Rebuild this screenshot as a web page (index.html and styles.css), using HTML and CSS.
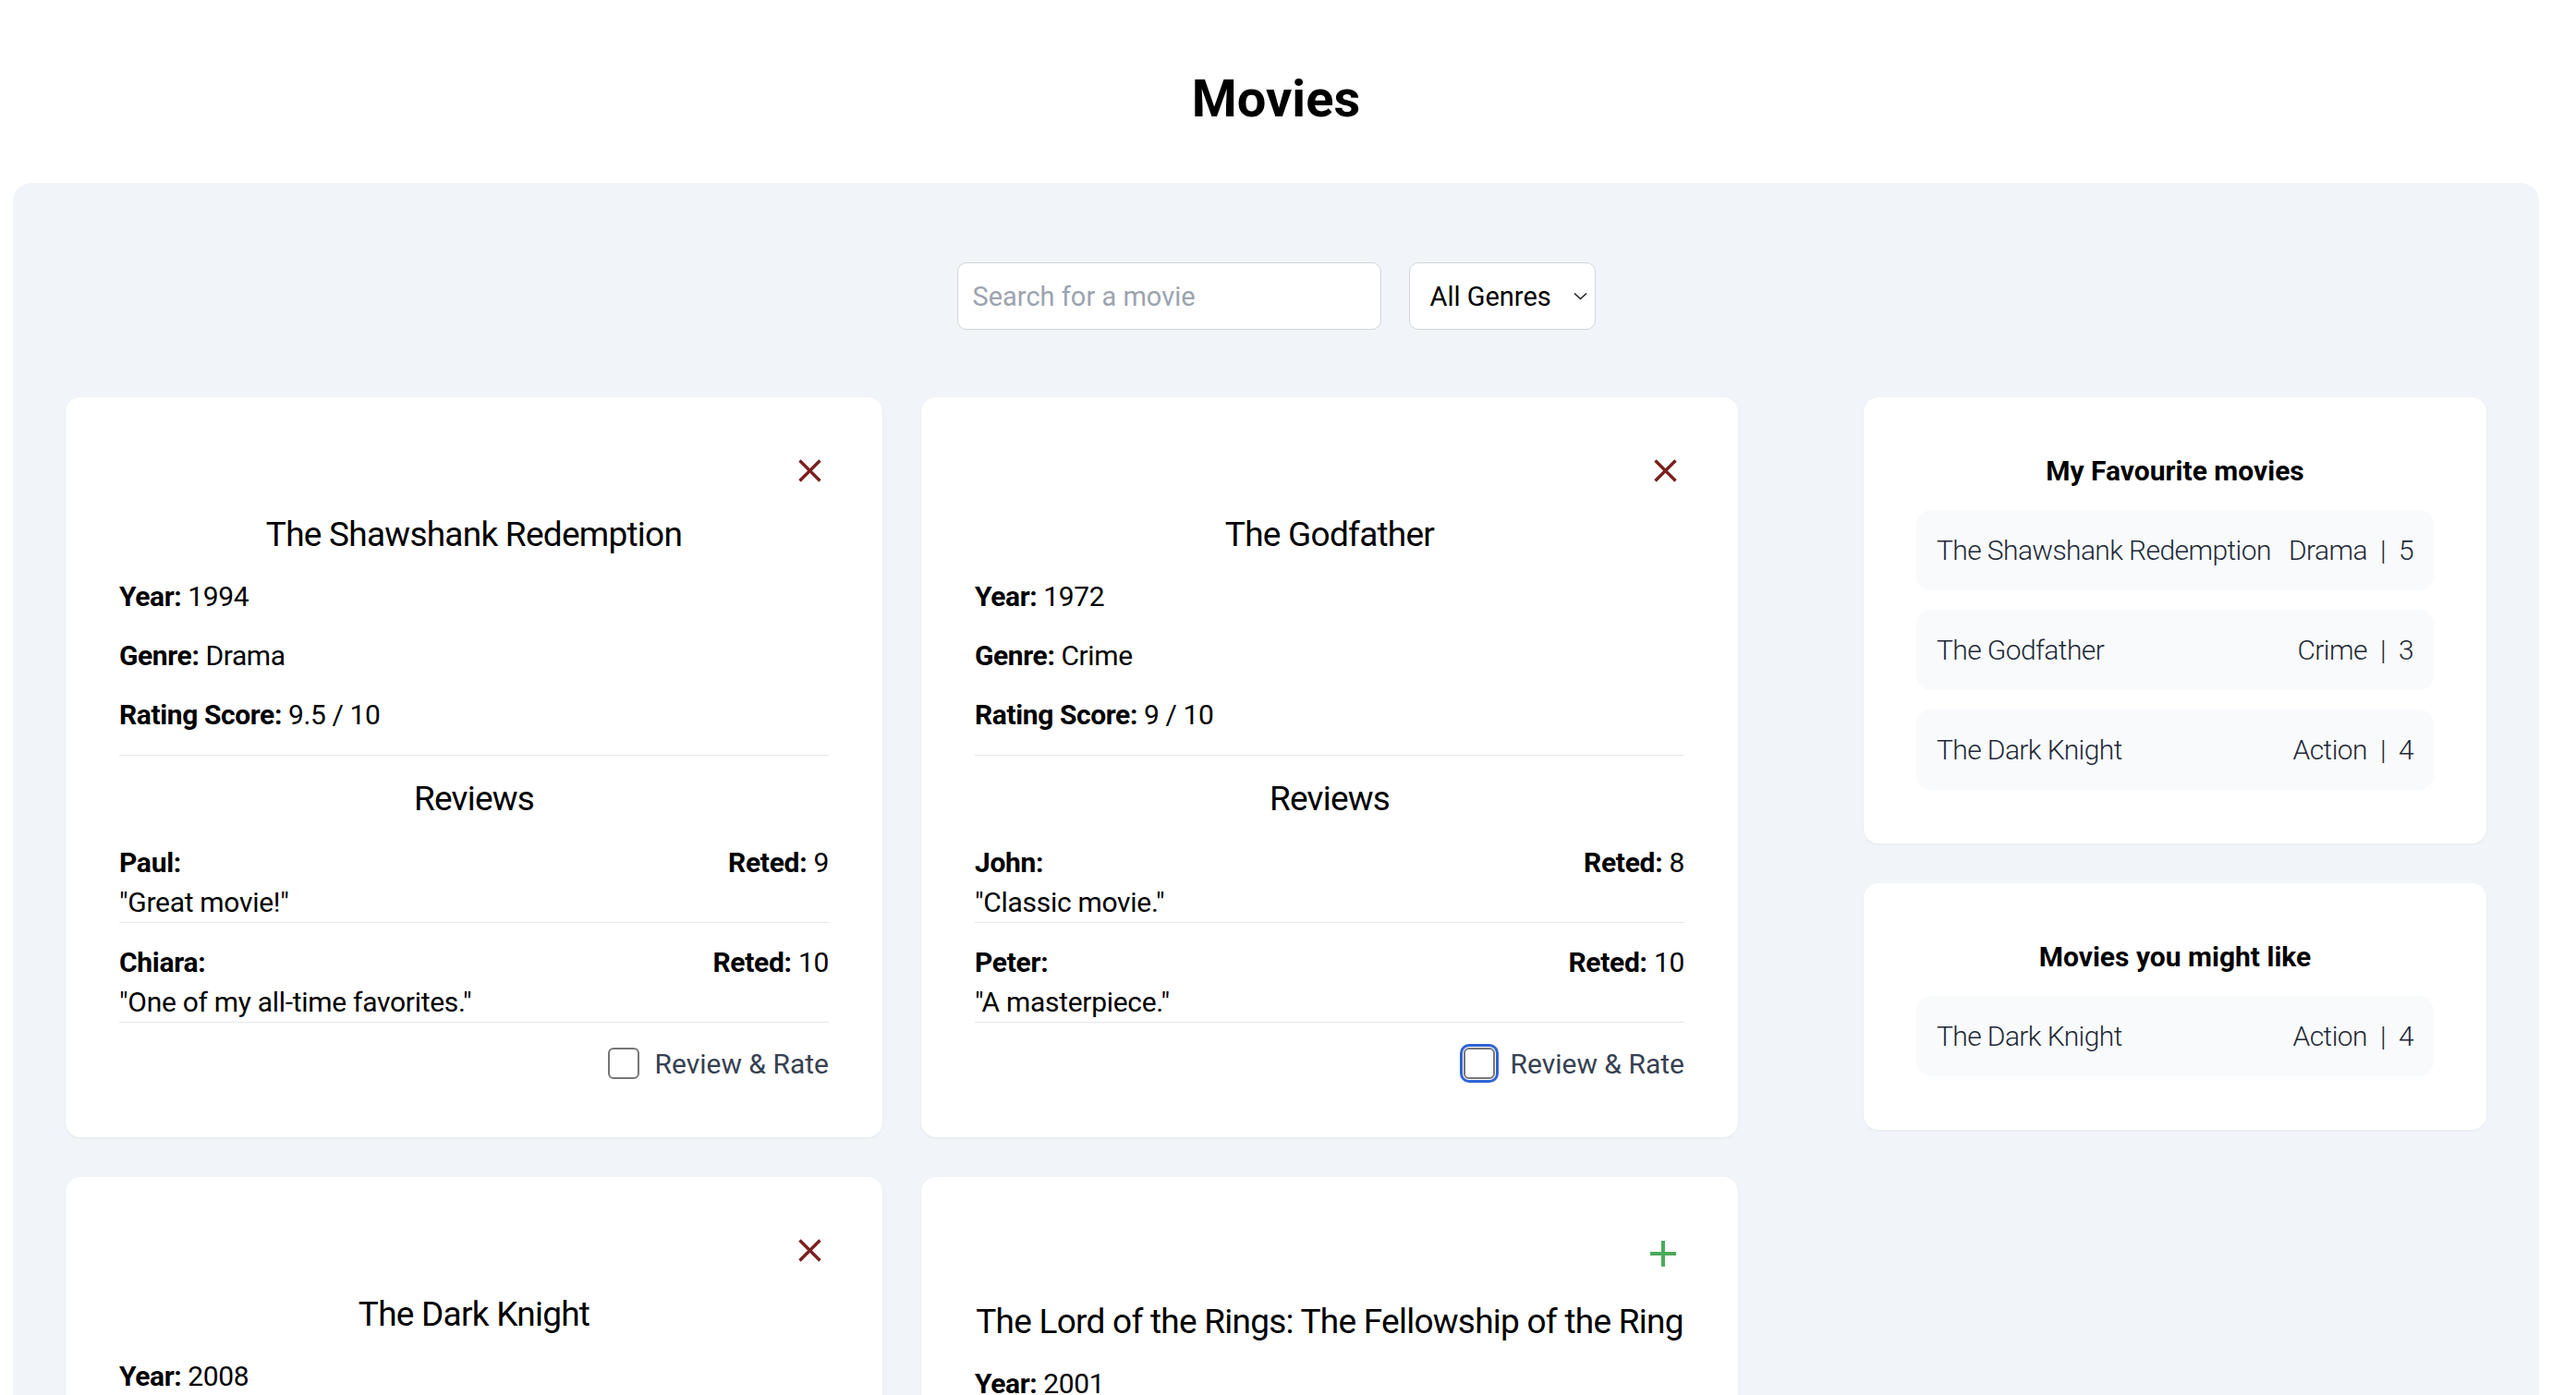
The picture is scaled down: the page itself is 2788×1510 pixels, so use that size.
FILE: index.html
```html
<!DOCTYPE html>
<html lang="en">
<head>
<meta charset="utf-8">
<title>Movies</title>
<link rel="stylesheet" href="styles.css">
</head>
<body>
<div class="page">
  <h1 class="page-title">Movies</h1>
  <main class="panel">
    <div class="filters">
      <input class="search" type="text" placeholder="Search for a movie">
      <div class="select">
        <span>All Genres</span>
        <svg class="chevron" width="15" height="9" viewBox="0 0 15 9"><path d="M1 1.5 L7.5 7.5 L14 1.5" fill="none" stroke="#222" stroke-width="1.6"/></svg>
      </div>
    </div>
    <div class="layout">
      <section class="movies">
        <article class="card">
          <div class="card-top">
            <button class="icon-btn" type="button" aria-label="Remove"><svg width="25" height="25" viewBox="0 0 25 25"><path d="M1.5 1.5 L23.5 23.5 M23.5 1.5 L1.5 23.5" stroke="#7b1f1f" stroke-width="3.4" fill="none"/></svg></button>
          </div>
          <h2 class="card-title">The Shawshank Redemption</h2>
          <p class="info"><b>Year:</b> 1994</p>
          <p class="info"><b>Genre:</b> Drama</p>
          <p class="info"><b>Rating Score:</b> 9.5 / 10</p>
          <div class="reviews">
            <h3 class="reviews-title">Reviews</h3>
            <div class="review">
              <div class="review-head"><b>Paul:</b><span><b>Reted:</b> 9</span></div>
              <div>"Great movie!"</div>
            </div>
            <div class="review">
              <div class="review-head"><b>Chiara:</b><span><b>Reted:</b> 10</span></div>
              <div>"One of my all-time favorites."</div>
            </div>
          </div>
          <label class="review-action"><input class="checkbox" type="checkbox"><span>Review &amp; Rate</span></label>
        </article>

        <article class="card">
          <div class="card-top">
            <button class="icon-btn" type="button" aria-label="Remove"><svg width="25" height="25" viewBox="0 0 25 25"><path d="M1.5 1.5 L23.5 23.5 M23.5 1.5 L1.5 23.5" stroke="#7b1f1f" stroke-width="3.4" fill="none"/></svg></button>
          </div>
          <h2 class="card-title">The Godfather</h2>
          <p class="info"><b>Year:</b> 1972</p>
          <p class="info"><b>Genre:</b> Crime</p>
          <p class="info"><b>Rating Score:</b> 9 / 10</p>
          <div class="reviews">
            <h3 class="reviews-title">Reviews</h3>
            <div class="review">
              <div class="review-head"><b>John:</b><span><b>Reted:</b> 8</span></div>
              <div>"Classic movie."</div>
            </div>
            <div class="review">
              <div class="review-head"><b>Peter:</b><span><b>Reted:</b> 10</span></div>
              <div>"A masterpiece."</div>
            </div>
          </div>
          <label class="review-action"><input class="checkbox checkbox-focus" type="checkbox"><span>Review &amp; Rate</span></label>
        </article>

        <article class="card">
          <div class="card-top">
            <button class="icon-btn" type="button" aria-label="Remove"><svg width="25" height="25" viewBox="0 0 25 25"><path d="M1.5 1.5 L23.5 23.5 M23.5 1.5 L1.5 23.5" stroke="#7b1f1f" stroke-width="3.4" fill="none"/></svg></button>
          </div>
          <h2 class="card-title">The Dark Knight</h2>
          <p class="info"><b>Year:</b> 2008</p>
          <p class="info"><b>Genre:</b> Action</p>
          <p class="info"><b>Rating Score:</b> 9 / 10</p>
          <div class="reviews">
            <h3 class="reviews-title">Reviews</h3>
            <div class="review">
              <div class="review-head"><b>Anna:</b><span><b>Reted:</b> 9</span></div>
              <div>"Heath Ledger is amazing."</div>
            </div>
          </div>
          <label class="review-action"><input class="checkbox" type="checkbox"><span>Review &amp; Rate</span></label>
        </article>

        <article class="card">
          <div class="card-top">
            <button class="icon-btn icon-btn-add" type="button" aria-label="Add"><svg width="30" height="30" viewBox="0 0 30 30"><path d="M15 1 L15 29 M1 15 L29 15" stroke="#4caa5a" stroke-width="4" fill="none"/></svg></button>
          </div>
          <h2 class="card-title">The Lord of the Rings: The Fellowship of the Ring</h2>
          <p class="info"><b>Year:</b> 2001</p>
          <p class="info"><b>Genre:</b> Fantasy</p>
          <p class="info"><b>Rating Score:</b> 8.8 / 10</p>
          <div class="reviews">
            <h3 class="reviews-title">Reviews</h3>
            <div class="review">
              <div class="review-head"><b>Marco:</b><span><b>Reted:</b> 9</span></div>
              <div>"An epic journey."</div>
            </div>
          </div>
          <label class="review-action"><input class="checkbox" type="checkbox"><span>Review &amp; Rate</span></label>
        </article>
      </section>

      <aside class="sidebar">
        <div class="side-card">
          <h3 class="side-title">My Favourite movies</h3>
          <ul class="side-list">
            <li class="side-item"><span>The Shawshank Redemption</span><span>Drama<span class="sep">|</span>5</span></li>
            <li class="side-item"><span>The Godfather</span><span>Crime<span class="sep">|</span>3</span></li>
            <li class="side-item"><span>The Dark Knight</span><span>Action<span class="sep">|</span>4</span></li>
          </ul>
        </div>
        <div class="side-card">
          <h3 class="side-title">Movies you might like</h3>
          <ul class="side-list">
            <li class="side-item"><span>The Dark Knight</span><span>Action<span class="sep">|</span>4</span></li>
          </ul>
        </div>
      </aside>
    </div>
  </main>
</div>
</body>
</html>
```

FILE: styles.css
```css
* { box-sizing: border-box; }

body {
  margin: 0;
  background: #ffffff;
  color: #000000;
  font-family: Roboto, Inter, "Liberation Sans", sans-serif;
}

.page {
  margin: 0 40px 0 14px;
}

.page-title {
  margin: 73px 0 57px;
  text-align: center;
  font-size: 56px;
  line-height: 68px;
  font-weight: 700;
  color: #000;
}

.panel {
  display: block;
  background: #f1f5f9;
  border-radius: 20px 20px 0 0;
  padding: 86px 57px 80px;
}

.filters {
  display: flex;
  justify-content: center;
  gap: 30px;
  margin-bottom: 73px;
}

.search {
  width: 459px;
  height: 73px;
  border: 1px solid #d1d5db;
  border-radius: 10px;
  padding: 0 16px;
  background: #fff;
  font-family: inherit;
  font-size: 29px;
  color: #111;
  outline: none;
}

.search::placeholder { color: #9ca3af; }

.select {
  width: 202px;
  height: 73px;
  border: 1px solid #d1d5db;
  border-radius: 10px;
  background: #fff;
  display: flex;
  align-items: center;
  justify-content: space-between;
  padding: 0 8px 0 22px;
  font-size: 29px;
  color: #000;
}

.layout {
  display: flex;
  justify-content: space-between;
  align-items: flex-start;
}

.movies {
  display: grid;
  grid-template-columns: 884px 884px;
  gap: 43px 42px;
  align-items: start;
}

.card {
  background: #fff;
  border-radius: 16px;
  padding: 58px;
  box-shadow: 0 1px 3px rgba(15, 23, 42, 0.06);
}

.card-top {
  display: flex;
  justify-content: flex-end;
}

.icon-btn {
  width: 42px;
  height: 42px;
  padding: 0;
  border: 0;
  background: none;
  display: flex;
  align-items: center;
  justify-content: center;
}

.icon-btn-add {
  width: 46px;
  height: 50px;
}

.card-title {
  margin: 23px 0 0;
  font-size: 37px;
  line-height: 52px;
  font-weight: 400;
  letter-spacing: -0.75px;
  text-align: center;
  white-space: nowrap;
  color: #000;
}

.info {
  margin: 20px 0 0;
  font-size: 30px;
  line-height: 44px;
  letter-spacing: -0.4px;
  color: #000;
}

.card-title + .info { margin-top: 19px; }

.info b, .review b { font-weight: 700; }

.reviews {
  margin-top: 21px;
  border-top: 1px solid #e5e7eb;
  padding-top: 20px;
}

.reviews-title {
  margin: 0;
  font-size: 37px;
  line-height: 53px;
  font-weight: 400;
  letter-spacing: -0.8px;
  text-align: center;
  color: #000;
}

.review {
  padding-top: 21px;
  border-bottom: 1px solid #e5e7eb;
  font-size: 30px;
  line-height: 43px;
  letter-spacing: -0.3px;
  color: #000;
}

.review-head {
  display: flex;
  justify-content: space-between;
}

.review-action {
  display: flex;
  justify-content: flex-end;
  align-items: center;
  gap: 16px;
  margin-top: 22px;
  height: 44px;
  font-size: 30px;
  color: #374151;
}

.checkbox {
  appearance: none;
  -webkit-appearance: none;
  width: 34px;
  height: 34px;
  margin: 0;
  border: 2px solid #767676;
  border-radius: 6px;
  background: #fff;
}

.checkbox-focus {
  outline: 3px solid #2f63d6;
  outline-offset: 1px;
}

.sidebar {
  width: 674px;
  display: flex;
  flex-direction: column;
  gap: 43px;
}

.side-card {
  background: #fff;
  border-radius: 16px;
  padding: 58px 57px;
  box-shadow: 0 1px 3px rgba(15, 23, 42, 0.06);
}

.side-title {
  margin: 0 0 20px;
  text-align: center;
  font-size: 30px;
  line-height: 44px;
  font-weight: 700;
  color: #000;
}

.side-list {
  list-style: none;
  margin: 0;
  padding: 0;
  display: flex;
  flex-direction: column;
  gap: 21px;
}

.side-item {
  height: 87px;
  border-radius: 16px;
  background: #f8fafc;
  display: flex;
  align-items: center;
  justify-content: space-between;
  padding: 0 22px;
  font-size: 30px;
  font-weight: 300;
  letter-spacing: -0.6px;
  color: #1f2937;
}

.sep { margin: 0 14px; }
```
